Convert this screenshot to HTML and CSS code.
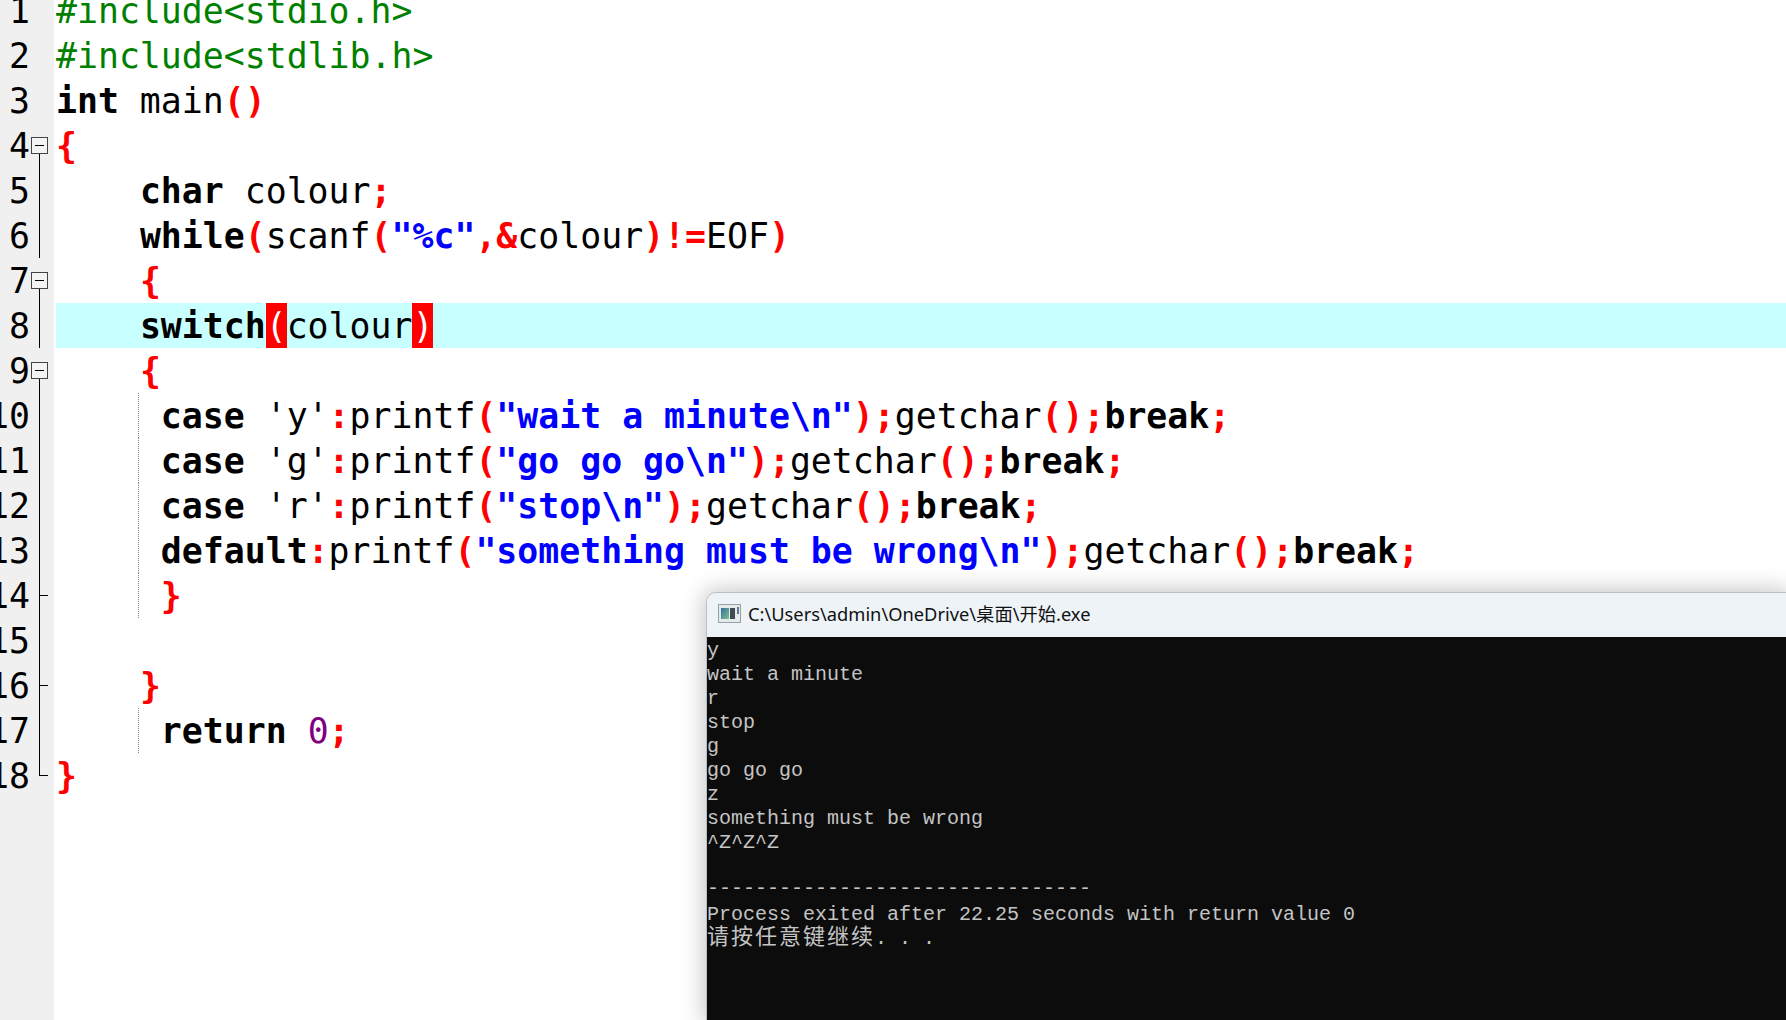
FILE: index.html
```html
<!DOCTYPE html>
<html lang="en">
<head>
<meta charset="utf-8">
<title>Dev-C++</title>
<link rel="stylesheet" href="styles.css">
</head>
<body>
<main class="editor">
<div class="row"><div class="gutter"><span class="num">1</span><span class="fold"></span></div><div class="code"><span class="pp">#include&lt;stdio.h&gt;</span></div></div>
<div class="row"><div class="gutter"><span class="num">2</span><span class="fold"></span></div><div class="code"><span class="pp">#include&lt;stdlib.h&gt;</span></div></div>
<div class="row"><div class="gutter"><span class="num">3</span><span class="fold"></span></div><div class="code"><b>int</b> main<i>()</i></div></div>
<div class="row"><div class="gutter"><span class="num">4</span><span class="fold start"></span></div><div class="code"><i>{</i></div></div>
<div class="row"><div class="gutter"><span class="num">5</span><span class="fold line"></span></div><div class="code">    <b>char</b> colour<i>;</i></div></div>
<div class="row"><div class="gutter"><span class="num">6</span><span class="fold line"></span></div><div class="code">    <b>while</b><i>(</i>scanf<i>(</i><em>"%c"</em><i>,&amp;</i>colour<i>)!=</i>EOF<i>)</i></div></div>
<div class="row"><div class="gutter"><span class="num">7</span><span class="fold start"></span></div><div class="code">    <i>{</i></div></div>
<div class="row"><div class="gutter"><span class="num">8</span><span class="fold line"></span></div><div class="code current">    <b>switch</b><span class="match">(</span>colour<span class="match">)</span></div></div>
<div class="row"><div class="gutter"><span class="num">9</span><span class="fold start"></span></div><div class="code">    <i>{</i></div></div>
<div class="row"><div class="gutter"><span class="num">10</span><span class="fold line"></span></div><div class="code guide">     <b>case</b> 'y'<i>:</i>printf<i>(</i><em>"wait a minute\n"</em><i>);</i>getchar<i>();</i><b>break</b><i>;</i></div></div>
<div class="row"><div class="gutter"><span class="num">11</span><span class="fold line"></span></div><div class="code guide">     <b>case</b> 'g'<i>:</i>printf<i>(</i><em>"go go go\n"</em><i>);</i>getchar<i>();</i><b>break</b><i>;</i></div></div>
<div class="row"><div class="gutter"><span class="num">12</span><span class="fold line"></span></div><div class="code guide">     <b>case</b> 'r'<i>:</i>printf<i>(</i><em>"stop\n"</em><i>);</i>getchar<i>();</i><b>break</b><i>;</i></div></div>
<div class="row"><div class="gutter"><span class="num">13</span><span class="fold line"></span></div><div class="code guide">     <b>default</b><i>:</i>printf<i>(</i><em>"something must be wrong\n"</em><i>);</i>getchar<i>();</i><b>break</b><i>;</i></div></div>
<div class="row"><div class="gutter"><span class="num">14</span><span class="fold tick"></span></div><div class="code guide">     <i>}</i></div></div>
<div class="row"><div class="gutter"><span class="num">15</span><span class="fold line"></span></div><div class="code"></div></div>
<div class="row"><div class="gutter"><span class="num">16</span><span class="fold tick"></span></div><div class="code">    <i>}</i></div></div>
<div class="row"><div class="gutter"><span class="num">17</span><span class="fold line"></span></div><div class="code guide">     <b>return</b> <span class="number">0</span><i>;</i></div></div>
<div class="row"><div class="gutter"><span class="num">18</span><span class="fold end"></span></div><div class="code"><i>}</i></div></div>
<div class="row rest"><div class="gutter"></div><div class="code"></div></div>
</main>
<section class="console">
<header class="console-title">
<svg class="console-icon" width="23" height="19" viewBox="0 0 23 19" aria-hidden="true">
<defs><linearGradient id="tile" x1="0" y1="0" x2="1" y2="1"><stop offset="0" stop-color="#2f6f9f"/><stop offset="1" stop-color="#7fc08f"/></linearGradient></defs>
<rect x="0.5" y="0.5" width="22" height="18" fill="#e6e9ea" stroke="#9aa1a6"/>
<rect x="3" y="4" width="8" height="11" fill="url(#tile)"/>
<rect x="12" y="4" width="5" height="11" fill="#3f4a52"/>
<rect x="19" y="3" width="2" height="7" fill="#5b7a8e"/>
</svg>
<span class="console-name">C:\Users\admin\OneDrive\桌面\开始.exe</span>
</header>
<pre class="console-body">y
wait a minute
r
stop
g
go go go
z
something must be wrong
^Z^Z^Z

<span class="rule">--------------------------------</span>
Process exited after 22.25 seconds with return value 0
<span class="cjk">请按任意键继续</span>. . .</pre>
</section>
</body>
</html>
```
FILE: styles.css
```css
html, body {
  margin: 0;
  height: 1020px;
  overflow: hidden;
  background: #fff;
}
.editor {
  display: flex;
  flex-direction: column;
  margin-top: -12px;
  font-family: "DejaVu Sans Mono", monospace;
  font-size: 34.85px;
  color: #000;
}
.row {
  display: flex;
  height: 45px;
  line-height: 47px;
}
.rest { height: 222px; }
.gutter {
  flex: 0 0 54px;
  display: flex;
  background: #f0f0f0;
}
.num {
  flex: 0 0 30px;
  display: flex;
  justify-content: flex-end;
  overflow: hidden;
  white-space: nowrap;
}
.fold {
  flex: 0 0 24px;
  position: relative;
}
.fold.line::before,
.fold.tick::before {
  content: "";
  position: absolute;
  left: 9px;
  top: 0;
  bottom: 0;
  width: 1px;
  background: #000;
}
.fold.tick::after {
  content: "";
  position: absolute;
  left: 9px;
  top: 22px;
  width: 9px;
  height: 1px;
  background: #000;
}
.fold.end::before {
  content: "";
  position: absolute;
  left: 9px;
  top: 0;
  width: 8px;
  height: 22px;
  border-left: 1px solid #000;
  border-bottom: 1px solid #000;
}
.fold.start::before {
  content: "";
  position: absolute;
  left: 1px;
  top: 14px;
  width: 15px;
  height: 15px;
  border: 1px solid #444;
  background: linear-gradient(#000, #000) center / 9px 1px no-repeat #f4f4f4;
}
.fold.start::after {
  content: "";
  position: absolute;
  left: 9px;
  top: 31px;
  bottom: 0;
  width: 1px;
  background: #000;
}
.code {
  flex: 1;
  margin-left: 2px;
  position: relative;
  white-space: pre;
}
.current { background: #c8ffff; }
.guide::before {
  content: "";
  position: absolute;
  left: 82px;
  top: 0;
  bottom: 0;
  border-left: 1px dotted #888;
}
.code b { font-weight: 700; }
.code i {
  font-style: normal;
  font-weight: 700;
  color: #f00;
}
.code em {
  font-style: normal;
  font-weight: 700;
  color: #00f;
}
.pp { color: #008000; }
.number { color: #800080; }
.match {
  display: inline-block;
  height: 45px;
  background: #f00;
  color: #fff;
}
.console {
  position: absolute;
  left: 707px;
  top: 593px;
  right: 0;
  bottom: 0;
  display: flex;
  flex-direction: column;
  border-radius: 9px 0 0 0;
  box-shadow: 0 0 0 1px #bdbdbd, 0 0 22px 4px rgba(0, 0, 0, 0.22);
}
.console-title {
  flex: 0 0 44px;
  box-sizing: border-box;
  display: flex;
  align-items: center;
  gap: 7px;
  padding: 0 0 3px 11px;
  background: #eef3f8;
  border-radius: 9px 0 0 0;
  font-family: "Noto Sans", "Noto Sans CJK SC", sans-serif;
  font-size: 18.3px;
  color: #111;
}
.console-icon { flex: none; }
.console-name {
  margin-bottom: 2px;
  white-space: nowrap;
}
.console-body {
  flex: 1;
  margin: 0;
  padding: 2px 0 0;
  background: #0c0c0c;
  color: #c4c4c4;
  font-family: "Liberation Mono", "Noto Sans CJK SC", monospace;
  font-size: 20px;
  line-height: 24px;
}
.rule {
  line-height: 0;
  vertical-align: 2px;
}
.cjk {
  font-family: "Noto Sans CJK SC", sans-serif;
  font-size: 22px;
  letter-spacing: 2px;
  line-height: 0;
}
```
